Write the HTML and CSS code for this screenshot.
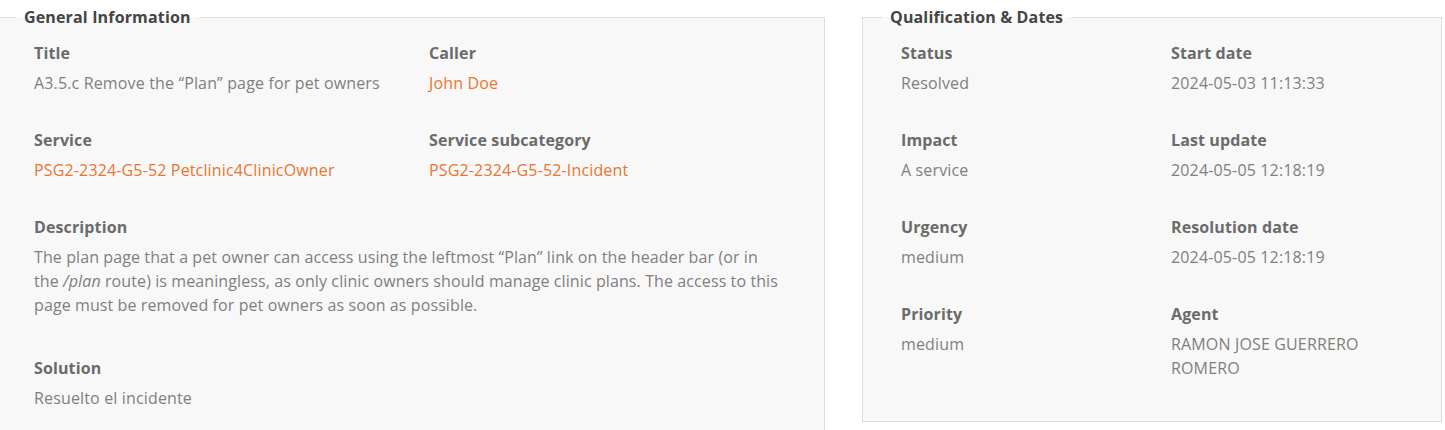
FILE: index.html
```html
<!DOCTYPE html>
<html lang="en">
<head>
<meta charset="utf-8">
<title>Incident detail</title>
<link rel="stylesheet" href="styles.css">
</head>
<body>
<div class="page">
  <fieldset class="panel panel-general">
    <legend class="panel-legend">General Information</legend>
    <div class="grid grid-general">
      <div class="field">
        <div class="field-label">Title</div>
        <div class="field-value">A3.5.c Remove the “Plan” page for pet owners</div>
      </div>
      <div class="field">
        <div class="field-label">Caller</div>
        <div class="field-value"><a class="link" href="#">John Doe</a></div>
      </div>
      <div class="field">
        <div class="field-label">Service</div>
        <div class="field-value"><a class="link" href="#">PSG2-2324-G5-52 Petclinic4ClinicOwner</a></div>
      </div>
      <div class="field">
        <div class="field-label">Service subcategory</div>
        <div class="field-value"><a class="link" href="#">PSG2-2324-G5-52-Incident</a></div>
      </div>
      <div class="field field-wide field-desc">
        <div class="field-label">Description</div>
        <div class="field-value desc-text">The plan page that a pet owner can access using the leftmost “Plan” link on the header bar (or in the <em class="route">/plan</em> route) is meaningless, as only clinic owners should manage clinic plans. The access to this page must be removed for pet owners as soon as possible.</div>
      </div>
      <div class="field field-wide">
        <div class="field-label">Solution</div>
        <div class="field-value">Resuelto el incidente</div>
      </div>
    </div>
  </fieldset>

  <fieldset class="panel panel-dates">
    <legend class="panel-legend">Qualification &amp; Dates</legend>
    <div class="grid grid-dates">
      <div class="field">
        <div class="field-label">Status</div>
        <div class="field-value">Resolved</div>
      </div>
      <div class="field">
        <div class="field-label">Start date</div>
        <div class="field-value">2024-05-03 11:13:33</div>
      </div>
      <div class="field">
        <div class="field-label">Impact</div>
        <div class="field-value">A service</div>
      </div>
      <div class="field">
        <div class="field-label">Last update</div>
        <div class="field-value">2024-05-05 12:18:19</div>
      </div>
      <div class="field">
        <div class="field-label">Urgency</div>
        <div class="field-value">medium</div>
      </div>
      <div class="field">
        <div class="field-label">Resolution date</div>
        <div class="field-value">2024-05-05 12:18:19</div>
      </div>
      <div class="field">
        <div class="field-label">Priority</div>
        <div class="field-value">medium</div>
      </div>
      <div class="field">
        <div class="field-label">Agent</div>
        <div class="field-value">RAMON JOSE GUERRERO ROMERO</div>
      </div>
    </div>
  </fieldset>
</div>
</body>
</html>
```

FILE: styles.css
```css
html, body {
  margin: 0;
  padding: 0;
  background: #ffffff;
}
body {
  font-family: "Open Sans", "Liberation Sans", sans-serif;
  color: #7f7f7f;
  letter-spacing: 0.12px;
  overflow: hidden;
}
.page {
  display: flex;
  align-items: flex-start;
  padding-top: 6px;
  margin-left: -3px;
}
.panel {
  margin: 0;
  border: 1px solid #dddddd;
  background: #f8f8f8;
  min-width: 0;
}
.panel-legend {
  font-size: 16px;
  font-weight: 700;
  line-height: 22px;
  color: #454545;
  padding: 0 8px;
  letter-spacing: 0.15px;
}
.panel-general {
  width: 828px;
  flex: 0 0 auto;
  padding: 13px 20px 40px 36px;
  box-sizing: border-box;
  margin-right: 37px;
  height: 460px;
}
.panel-general .panel-legend {
  margin-left: -18px;
}
.panel-dates {
  width: 580px;
  flex: 0 0 auto;
  box-sizing: border-box;
  padding: 13px 20px 8px 38px;
}
.panel-dates .panel-legend {
  margin-left: -19px;
}
.grid {
  display: grid;
}
.grid-general {
  grid-template-columns: 395px 1fr;
}
.grid-dates {
  grid-template-columns: 270px 232px;
}
.field {
  margin-bottom: 33px;
}
.field-wide {
  grid-column: 1 / -1;
}
.field-desc {
  margin-bottom: 39px;
}
.field-label {
  font-size: 16px;
  font-weight: 700;
  line-height: 24px;
  color: #6b6b6b;
  margin-bottom: 6px;
}
.field-value {
  font-size: 16px;
  line-height: 24px;
  color: #7f7f7f;
  letter-spacing: 0.15px;
}
.desc-text {
  max-width: 750px;
  letter-spacing: 0.1px;
}
.route {
  font-style: italic;
}
.link {
  color: #e8762f;
  text-decoration: none;
}
```
